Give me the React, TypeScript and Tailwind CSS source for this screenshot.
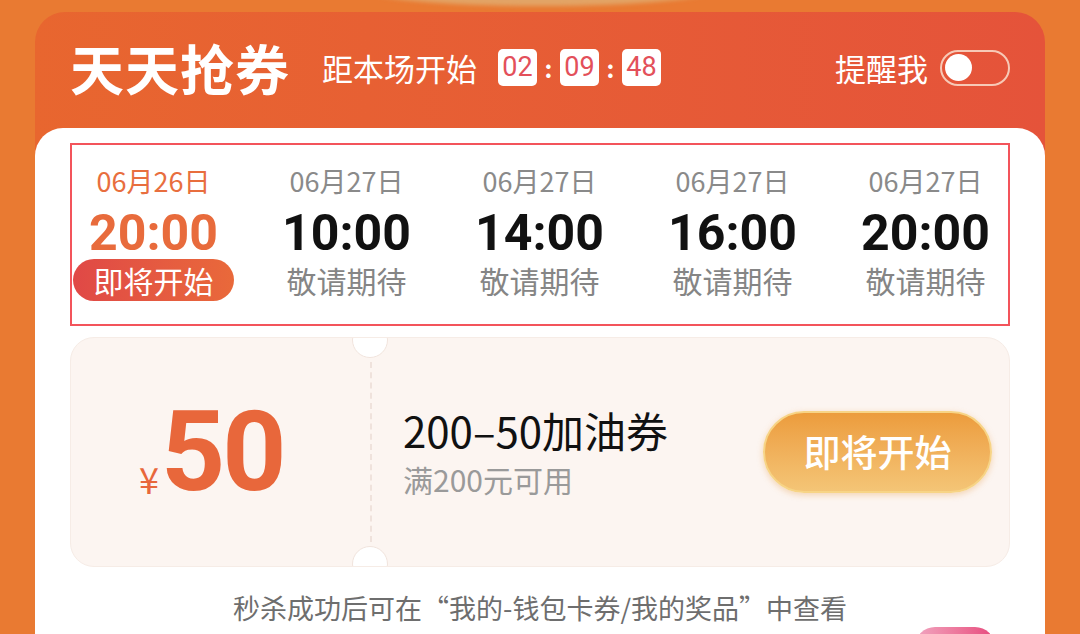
const cjk = { fontFamily: '"Noto Sans CJK SC", "Noto Sans", sans-serif' } as React.CSSProperties;
const num = { fontFamily: 'Roboto, "Noto Sans CJK SC", sans-serif' } as React.CSSProperties;

import React from "react";

const sessions = [
  { date: "06月26日", time: "20:00", active: true },
  { date: "06月27日", time: "10:00" },
  { date: "06月27日", time: "14:00" },
  { date: "06月27日", time: "16:00" },
  { date: "06月27日", time: "20:00" },
];

function TimeBox({ v }: { v: string }) {
  return (
    <span
      className="w-[39px] h-[37px] rounded-[5px] bg-white text-[#E3505A] text-[27px] leading-[37px] text-center"
      style={num}
    >
      {v}
    </span>
  );
}

export default function App() {
  return (
    <div className="w-[1080px] h-[634px] overflow-hidden bg-[#E97A32]" style={cjk}>
      <div className="relative h-[12px] overflow-hidden">
        <div className="absolute left-[360px] top-[-30px] w-[360px] h-[36px] rounded-[50%] bg-[#E2A466] blur-[2px]" />
      </div>

      <div className="mx-[35px] rounded-t-[30px] bg-gradient-to-r from-[#E8662F] to-[#E5533A]">
        <div className="h-[116px] flex items-center px-[35px] pb-[5px] text-white">
          <span className="text-[54px] font-bold leading-none tracking-[1px]">天天抢券</span>
          <span className="ml-[32px] text-[31px] leading-none">距本场开始</span>
          <div className="ml-[21px] flex items-center">
            <TimeBox v="02" />
            <span className="w-[23px] text-center text-[24px] font-bold">:</span>
            <TimeBox v="09" />
            <span className="w-[23px] text-center text-[24px] font-bold">:</span>
            <TimeBox v="48" />
          </div>
          <span className="ml-auto text-[31px] leading-none">提醒我</span>
          <div className="ml-[12px] w-[70px] h-[36px] rounded-full border-2 border-[#F7C9B6] flex items-center px-[3px]">
            <div className="w-[27px] h-[27px] rounded-full bg-white" />
          </div>
        </div>

        <div className="bg-white rounded-t-[28px] px-[35px] pt-[15px] pb-[20px]">
          <div className="h-[183px] border-2 border-[#F3545B] flex pl-[1px] gap-[32px] pt-[20px]">
            {sessions.map((s, i) => (
              <div key={i} className="w-[161px] flex flex-col items-center">
                <div
                  className={`text-[27px] leading-[32px] ${s.active ? "text-[#E86E3E]" : "text-[#8A8A8A]"}`}
                >
                  {s.date}
                </div>
                <div
                  className={`mt-[12px] text-[50px] font-bold leading-[48px] ${s.active ? "text-[#E86B3C]" : "text-[#111111]"}`}
                  style={num}
                >
                  {s.time}
                </div>
                {s.active ? (
                  <div className="mt-[2px] w-[161px] h-[42px] rounded-full bg-gradient-to-r from-[#E04846] to-[#E9693A] text-white text-[30px] leading-[42px] text-center">
                    即将开始
                  </div>
                ) : (
                  <div className="mt-[2px] text-[30px] leading-[42px] text-[#858585]">敬请期待</div>
                )}
              </div>
            ))}
          </div>

          <div className="relative overflow-hidden mt-[11px] h-[230px] rounded-[24px] bg-[#FCF5F1] border border-[#F6ECE6] flex items-center">
            <div className="absolute left-[281px] top-[-16px] w-[36px] h-[36px] rounded-full bg-white border border-[#F1E4DD]" />
            <div className="absolute left-[281px] bottom-[-16px] w-[36px] h-[36px] rounded-full bg-white border border-[#F1E4DD]" />

            <div className="w-[299px] h-full flex items-center pl-[68px] text-[#E8673B]">
              <span className="text-[36px] mt-[52px] leading-none">¥</span>
              <span className="text-[112px] font-bold leading-none tracking-[-3px] ml-[2px]" style={num}>
                50
              </span>
            </div>
            <div className="h-[180px] border-l-2 border-dashed border-[#EFE2DC]" />

            <div className="ml-[31px] flex flex-col">
              <span className="text-[42px] leading-[46px] text-[#111111]">200–50加油券</span>
              <span className="mt-[8px] text-[30px] leading-[36px] text-[#9A9A9A]">满200元可用</span>
            </div>

            <div className="ml-auto mr-[17px] w-[229px] h-[82px] rounded-full border-2 border-[#F7D486] bg-gradient-to-b from-[#EC9C3C] to-[#F4C576] shadow-[0_2px_6px_rgba(230,150,60,0.35)] flex items-center justify-center text-white text-[37px] font-medium">
              即将开始
            </div>
          </div>

          <div className="mt-[24px] text-center text-[27px] leading-[34px] text-[#6E6E6E]">
            秒杀成功后可在“我的-钱包卡券/我的奖品”中查看
          </div>
          <div className="flex justify-end pr-[15px] mt-[2px]">
            <div className="w-[80px] h-[40px] rounded-full bg-gradient-to-r from-[#F0A5C0] to-[#E6477D]" />
          </div>
        </div>
      </div>
    </div>
  );
}
